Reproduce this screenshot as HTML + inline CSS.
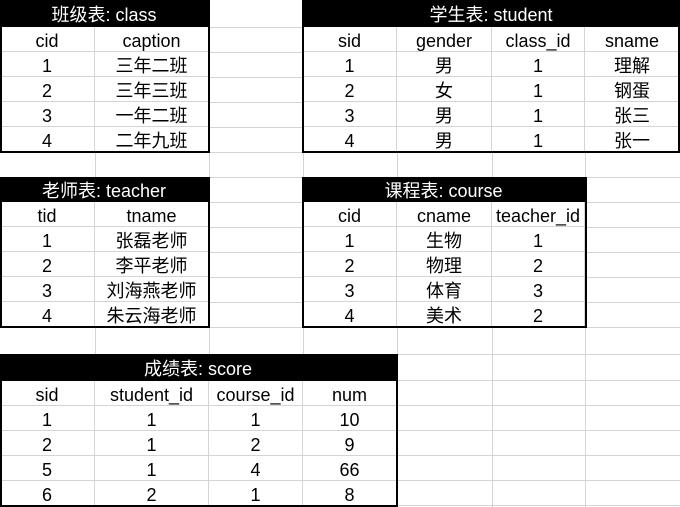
<!DOCTYPE html>
<html><head><meta charset="utf-8"><style>
html,body{margin:0;padding:0;overflow:hidden}
body{width:680px;height:507px;position:relative;background:#fff;
font-family:"Liberation Sans","Noto Sans CJK SC",sans-serif;font-size:18px;color:#000}
.hl{position:absolute;left:0;width:680px;height:1px;background:#d4d4d4}
.v{position:absolute;top:0;width:1px;height:507px;background:#d4d4d4}
.t{position:absolute;display:grid;background:#fff}
.t div{border-right:1px solid #d4d4d4;border-bottom:1px solid #d4d4d4;display:flex;align-items:center;justify-content:center;white-space:nowrap;line-height:1;padding-top:3px;box-sizing:border-box}
.t div.h{background:#000;color:#fff;border-color:#000}
.b{position:absolute;border:2px solid #000;box-sizing:border-box}
</style></head><body>
<div class="hl" style="top:27px"></div><div class="hl" style="top:52px"></div><div class="hl" style="top:77px"></div>
<div class="hl" style="top:102px"></div><div class="hl" style="top:127px"></div><div class="hl" style="top:152px"></div>
<div class="hl" style="top:177px"></div><div class="hl" style="top:202px"></div><div class="hl" style="top:227px"></div>
<div class="hl" style="top:252px"></div><div class="hl" style="top:277px"></div><div class="hl" style="top:302px"></div>
<div class="hl" style="top:327px"></div><div class="hl" style="top:354px"></div><div class="hl" style="top:380px"></div>
<div class="hl" style="top:405px"></div><div class="hl" style="top:430px"></div><div class="hl" style="top:455px"></div>
<div class="hl" style="top:480px"></div><div class="hl" style="top:505px"></div>
<div class="v" style="left:95px"></div><div class="v" style="left:209px"></div><div class="v" style="left:303px"></div>
<div class="v" style="left:397px"></div><div class="v" style="left:492px"></div><div class="v" style="left:585px"></div>

<div class="t" style="left:0;top:0;width:209px;height:152px;grid-template-columns:95px 114px;grid-template-rows:27px repeat(5,25px)">
<div class="h" style="grid-column:1/3">班级表: class</div>
<div>cid</div><div>caption</div>
<div>1</div><div>三年二班</div><div>2</div><div>三年三班</div><div>3</div><div>一年二班</div><div>4</div><div>二年九班</div>
</div>
<div class="b" style="left:0;top:0;width:210px;height:153px"></div>

<div class="t" style="left:303px;top:0;width:377px;height:152px;grid-template-columns:94px 95px 93px 95px;grid-template-rows:27px repeat(5,25px)">
<div class="h" style="grid-column:1/5">学生表: student</div>
<div>sid</div><div>gender</div><div>class_id</div><div>sname</div>
<div>1</div><div>男</div><div>1</div><div>理解</div>
<div>2</div><div>女</div><div>1</div><div>钢蛋</div>
<div>3</div><div>男</div><div>1</div><div>张三</div>
<div>4</div><div>男</div><div>1</div><div>张一</div>
</div>
<div class="b" style="left:302px;top:0;width:378px;height:153px"></div>

<div class="t" style="left:0;top:177px;width:209px;height:150px;grid-template-columns:95px 114px;grid-template-rows:repeat(6,25px)">
<div class="h" style="grid-column:1/3">老师表: teacher</div>
<div>tid</div><div>tname</div>
<div>1</div><div>张磊老师</div><div>2</div><div>李平老师</div><div>3</div><div>刘海燕老师</div><div>4</div><div>朱云海老师</div>
</div>
<div class="b" style="left:0;top:177px;width:210px;height:151px"></div>

<div class="t" style="left:303px;top:177px;width:282px;height:150px;grid-template-columns:94px 95px 93px;grid-template-rows:repeat(6,25px)">
<div class="h" style="grid-column:1/4">课程表: course</div>
<div>cid</div><div>cname</div><div>teacher_id</div>
<div>1</div><div>生物</div><div>1</div>
<div>2</div><div>物理</div><div>2</div>
<div>3</div><div>体育</div><div>3</div>
<div>4</div><div>美术</div><div>2</div>
</div>
<div class="b" style="left:302px;top:177px;width:285px;height:151px"></div>

<div class="t" style="left:0;top:354px;width:397px;height:152px;grid-template-columns:95px 114px 94px 94px;grid-template-rows:27px repeat(5,25px)">
<div class="h" style="grid-column:1/5">成绩表: score</div>
<div>sid</div><div>student_id</div><div>course_id</div><div>num</div>
<div>1</div><div>1</div><div>1</div><div>10</div>
<div>2</div><div>1</div><div>2</div><div>9</div>
<div>5</div><div>1</div><div>4</div><div>66</div>
<div>6</div><div>2</div><div>1</div><div>8</div>
</div>
<div class="b" style="left:0;top:354px;width:398px;height:153px"></div>
</body></html>
